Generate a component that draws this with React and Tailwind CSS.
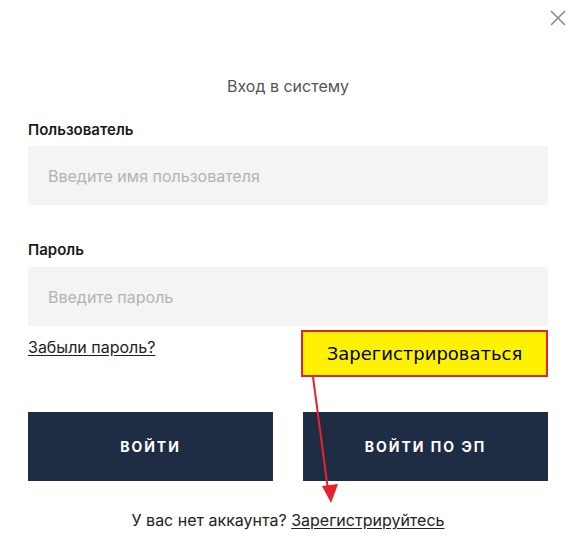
export default function App() {
  return (
    <div className="relative w-[578px] h-[558px] bg-white pl-[28px] pr-[30px] font-['Inter','Liberation_Sans',sans-serif]">
      {/* Close */}
      <button className="absolute right-[11px] top-[9px] w-[18px] h-[18px]">
        <svg viewBox="0 0 18 18" className="w-[18px] h-[18px]">
          <path d="M2 2L16 16M16 2L2 16" stroke="#8a8a8a" strokeWidth="1.6" fill="none" />
        </svg>
      </button>

      <div className="pt-[76px] text-center text-[16px] leading-5 text-[#555]">Вход в систему</div>

      <label className="block mt-[24px] text-[15px] leading-5 font-semibold text-[#1a1a1a]">Пользователь</label>
      <div className="mt-[6px] h-[59px] bg-[#f4f4f4] flex items-center px-[20px] text-[16px] text-[#b3b3b3]">
        Введите имя пользователя
      </div>

      <label className="block mt-[35px] text-[15px] leading-5 font-semibold text-[#1a1a1a]">Пароль</label>
      <div className="mt-[7px] h-[59px] bg-[#f4f4f4] flex items-center px-[20px] text-[16px] text-[#b3b3b3]">
        Введите пароль
      </div>

      <div className="mt-[11px] text-[16px] leading-5 text-[#222]">
        <a className="underline underline-offset-2">Забыли пароль?</a>
      </div>

      <div className="mt-[55px] flex gap-[30px]">
        <button className="w-[245px] h-[69px] bg-[#1f2d44] text-white text-[14px] font-bold tracking-[2px]">ВОЙТИ</button>
        <button className="w-[245px] h-[69px] bg-[#1f2d44] text-white text-[14px] font-bold tracking-[2px]">ВОЙТИ ПО ЭП</button>
      </div>

      <div className="mt-[29px] text-center text-[16px] leading-5 text-[#222]">
        У вас нет аккаунта? <a className="underline underline-offset-2">Зарегистрируйтесь</a>
      </div>

      {/* Annotation */}
      <div className="absolute left-[301px] top-[330px] w-[247px] h-[47px] bg-[#fff200] border-2 border-[#e8212b] flex items-center justify-center text-[18px] text-black font-['DejaVu_Sans','Open_Sans',sans-serif]">
        Зарегистрироваться
      </div>
      <svg className="absolute left-0 top-0 pointer-events-none" width="578" height="558">
        <line x1="313" y1="377" x2="328" y2="490" stroke="#e8212b" strokeWidth="2" />
        <polygon points="322,486 338,484 331,503" fill="#e8212b" />
      </svg>
    </div>
  );
}
